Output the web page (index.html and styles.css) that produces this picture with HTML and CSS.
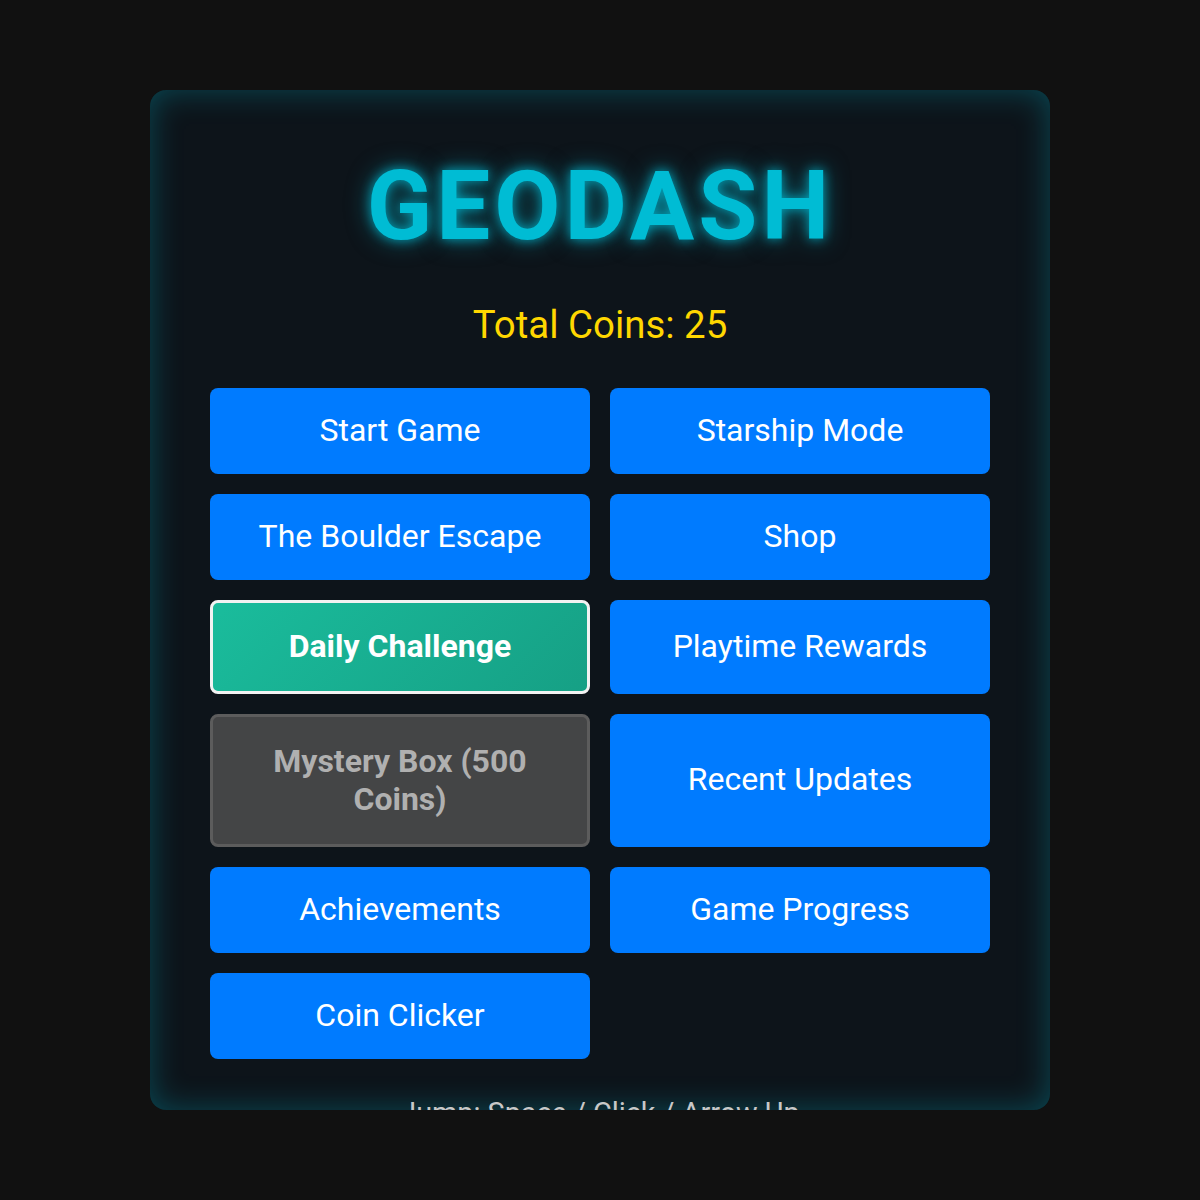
FILE: index.html
```html
<!DOCTYPE html>
<html lang="en">
<head>
<meta charset="utf-8">
<title>GeoDash</title>
<link rel="stylesheet" href="styles.css">
</head>
<body>
  <main class="menu">
    <h1 class="title">GEODASH</h1>
    <p class="coins">Total Coins: 25</p>
    <div class="buttons">
      <button class="btn">Start Game</button>
      <button class="btn">Starship Mode</button>
      <button class="btn">The Boulder Escape</button>
      <button class="btn">Shop</button>
      <button class="btn btn-daily">Daily Challenge</button>
      <button class="btn">Playtime Rewards</button>
      <button class="btn btn-locked">Mystery Box (500 Coins)</button>
      <button class="btn">Recent Updates</button>
      <button class="btn">Achievements</button>
      <button class="btn">Game Progress</button>
      <button class="btn">Coin Clicker</button>
    </div>
    <p class="controls">Jump: Space / Click / Arrow Up</p>
  </main>
</body>
</html>
```

FILE: styles.css
```css
* { box-sizing: border-box; }

html, body {
  margin: 0;
  height: 100%;
}

body {
  background: #111111;
  font-family: Roboto, "Liberation Sans", sans-serif;
  display: flex;
  align-items: center;
  justify-content: center;
}

.menu {
  width: 900px;
  height: 1020px;
  padding: 60px;
  overflow: hidden;
  border-radius: 16px;
  background: #0d141a;
  box-shadow: inset 0 0 32px rgba(0, 188, 212, 0.32);
  text-align: center;
}

.title {
  margin: 0 0 40px;
  font-size: 96px;
  font-weight: 700;
  letter-spacing: 4px;
  line-height: 112px;
  color: #00bcd4;
  text-shadow: 0 0 12px rgba(0, 188, 212, 0.8), 0 0 24px rgba(0, 188, 212, 0.5);
}

.coins {
  margin: 0 0 41px;
  font-size: 38.4px;
  line-height: 45px;
  color: #ffd700;
}

.buttons {
  display: grid;
  grid-template-columns: 1fr 1fr;
  gap: 20px;
}

.btn {
  font-family: inherit;
  font-size: 32px;
  line-height: 37.5px;
  padding: 24.25px 20px;
  border: none;
  border-radius: 8px;
  background: #007bff;
  color: #ffffff;
  cursor: pointer;
}

.btn-daily {
  padding: 25px 20px;
  border: 3px solid #f2f2f2;
  font-weight: 700;
  background: linear-gradient(135deg, #1abc9c, #16a085);
}

.btn-locked {
  padding: 25.5px 40px;
  border: 3px solid #5c5c5c;
  font-weight: 700;
  line-height: 38px;
  background: #444546;
  color: #b0b0b0;
}

.controls {
  margin: 37px 0 0;
  font-size: 28.8px;
  line-height: 34px;
  color: #c8c8c8;
}
```
